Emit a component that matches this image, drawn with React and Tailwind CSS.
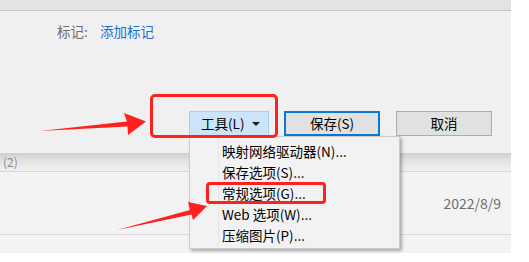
import React from 'react';

const font = { fontFamily: '"Noto Sans CJK SC", "Noto Sans", sans-serif' };

const menuItems = [
  '映射网络驱动器(N)...',
  '保存选项(S)...',
  '常规选项(G)...',
  'Web 选项(W)...',
  '压缩图片(P)...',
];

export default function App() {
  return (
    <div
      className="relative w-[529px] h-[262px] overflow-hidden bg-white text-[13.5px] leading-none"
      style={font}
    >
      <div className="w-[511px] flex flex-col">
        {/* top strip */}
        <div className="h-[11px] bg-[#e3e3e3] border-b border-[#c4c4c4]" />

        {/* dialog body */}
        <div className="h-[142px] bg-[#f0f0f0] flex flex-col">
          <div className="flex items-center pl-[57px] pt-[14px] text-[13.5px]">
            <span className="text-[#6e6e6e] w-[43px]">标记:</span>
            <span className="text-[#1c6fd0]">添加标记</span>
          </div>
          <div className="flex-1" />
          <div className="flex justify-end pr-[19px] pb-[17px] gap-[15px]">
            <button className="w-[80px] h-[25px] bg-[#cce4f7] border border-[#a9cdee] flex items-center pl-[11px] pr-[8px] text-black">
              <span>工具(L)</span>
              <span className="ml-auto w-0 h-0 border-l-[4px] border-r-[4px] border-t-[4px] border-l-transparent border-r-transparent border-t-[#1a1a1a]" />
            </button>
            <button className="w-[96px] h-[25px] bg-[#e1e1e1] border-2 border-[#0a78d7] text-black flex items-center justify-center">
              保存(S)
            </button>
            <button className="w-[96px] h-[25px] bg-[#e1e1e1] border border-[#adadad] text-black flex items-center justify-center ml-[1px]">
              取消
            </button>
          </div>
        </div>

        {/* background list below dialog */}
        <div className="h-[19px] bg-gradient-to-b from-[#cfcfcf] via-[#e6e6e6] to-[#f0f0f0] border-b border-[#d6d6d6] flex items-center">
          <span className="pl-[3px] text-[12px] leading-[14px] text-[#8a8a8a]">(2)</span>
        </div>
        <div className="h-[63px] bg-[#f3f3f3] border-b border-[#d9d9d9] flex items-center justify-end pr-[10px]">
          <span className="text-[#6e6e6e] text-[14px]">2022/8/9</span>
        </div>
        <div className="h-[18px] bg-[#f3f3f3]" />
      </div>

      {/* dropdown menu */}
      <div className="absolute left-[189px] top-[136px] w-[211px] h-[113px] bg-[#f2f2f2] border border-[#cccccc] shadow-[2px_2px_3px_rgba(0,0,0,0.3)] pt-[4px]">
        <div className="absolute left-[28px] top-0 bottom-0 border-l border-[#e6e6e6]" />
        {menuItems.map((item) => (
          <div key={item} className="h-[21px] flex items-center pl-[32px] text-black">
            {item}
          </div>
        ))}
      </div>

      {/* red highlight boxes */}
      <div className="absolute left-[150px] top-[94px] w-[128px] h-[44px] border-[3px] border-[#ff2020] rounded-[5px]" />
      <div className="absolute left-[206px] top-[182px] w-[120px] h-[22px] border-[3px] border-[#ff2020] rounded-[4px]" />

      {/* arrows */}
      <svg className="absolute left-0 top-0" width="529" height="262" viewBox="0 0 529 262">
        <polygon
          points="40,131 127,121.5 124,113 146,121.5 128,135 127.5,126.5"
          fill="#ff2020"
        />
        <polygon
          points="117,230 190,210 188,202 207,206 193,220 191.5,214.5"
          fill="#ff2020"
        />
      </svg>
    </div>
  );
}
